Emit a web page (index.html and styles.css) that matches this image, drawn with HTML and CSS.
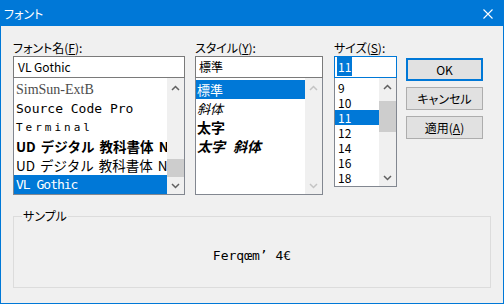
FILE: index.html
```html
<!DOCTYPE html>
<html lang="ja">
<head>
<meta charset="utf-8">
<title>フォント</title>
<link rel="stylesheet" href="styles.css">
</head>
<body>
<div class="window">
  <div class="titlebar">
    <span class="title">フォント</span>
    <svg class="close" width="10" height="10" viewBox="0 0 10 10"><path d="M0.5 0.5 L9.5 9.5 M9.5 0.5 L0.5 9.5" stroke="#fff" stroke-width="1.1" fill="none"/></svg>
  </div>
  <div class="content">
    <div class="top">
      <div class="col col-font">
        <div class="lbl">フォント名(<u>F</u>):</div>
        <div class="edit">VL Gothic</div>
        <div class="list list-font">
          <div class="items">
            <div class="item f-simsun">SimSun-ExtB</div>
            <div class="item f-scp">Source Code Pro</div>
            <div class="item f-term">Terminal</div>
            <div class="item f-ud bold">UD デジタル 教科書体 N-B</div>
            <div class="item f-ud">UD デジタル 教科書体 N-R</div>
            <div class="item f-vl sel">VL Gothic</div>
          </div>
          <div class="sb">
            <div class="sb-btn up"><svg width="9" height="6" viewBox="0 0 9 6"><polyline points="1,5 4.5,1.5 8,5" fill="none" stroke="#606060" stroke-width="1.5"/></svg></div>
            <div class="sb-track end"><div class="thumb t-font"></div></div>
            <div class="sb-btn down"><svg width="9" height="6" viewBox="0 0 9 6"><polyline points="1,1 4.5,4.5 8,1" fill="none" stroke="#606060" stroke-width="1.5"/></svg></div>
          </div>
        </div>
      </div>
      <div class="col col-style">
        <div class="lbl">スタイル(<u>Y</u>):</div>
        <div class="edit e-style">標準</div>
        <div class="list list-style">
          <div class="items">
            <div class="item s-item sel">標準</div>
            <div class="item s-item ital">斜体</div>
            <div class="item s-item s-bold bold">太字</div>
            <div class="item s-item s-bold bold ital">太字<span class="sp"></span>斜体</div>
          </div>
          <div class="sb">
            <div class="sb-btn up"><svg width="9" height="6" viewBox="0 0 9 6"><polyline points="1,5 4.5,1.5 8,5" fill="none" stroke="#c4c4c4" stroke-width="1.5"/></svg></div>
            <div class="sb-track"></div>
            <div class="sb-btn down"><svg width="9" height="6" viewBox="0 0 9 6"><polyline points="1,1 4.5,4.5 8,1" fill="none" stroke="#c4c4c4" stroke-width="1.5"/></svg></div>
          </div>
        </div>
      </div>
      <div class="col col-size">
        <div class="lbl">サイズ(<u>S</u>):</div>
        <div class="edit e-size focus"><span class="hl">11</span></div>
        <div class="list list-size">
          <div class="items">
            <div class="item z-item">9</div>
            <div class="item z-item">10</div>
            <div class="item z-item sel">11</div>
            <div class="item z-item">12</div>
            <div class="item z-item">14</div>
            <div class="item z-item">16</div>
            <div class="item z-item">18</div>
          </div>
          <div class="sb">
            <div class="sb-btn up z-up"><svg width="9" height="6" viewBox="0 0 9 6"><polyline points="1,5 4.5,1.5 8,5" fill="none" stroke="#606060" stroke-width="1.5"/></svg></div>
            <div class="sb-track"><div class="thumb t-size"></div></div>
            <div class="sb-btn down"><svg width="9" height="6" viewBox="0 0 9 6"><polyline points="1,1 4.5,4.5 8,1" fill="none" stroke="#606060" stroke-width="1.5"/></svg></div>
          </div>
        </div>
      </div>
      <div class="buttons">
        <div class="btn default">OK</div>
        <div class="btn">キャンセル</div>
        <div class="btn">適用(<u>A</u>)</div>
      </div>
    </div>
    <fieldset class="sample">
      <legend>サンプル</legend>
      <div class="sample-box"><span class="sample-text">Ferqœm’ 4€</span></div>
    </fieldset>
  </div>
</div>
</body>
</html>
```

FILE: styles.css
```css
html, body {
  margin: 0;
  padding: 0;
  background: #f0f0f0;
}

.window {
  width: 504px;
  height: 304px;
  box-sizing: border-box;
  border: 1px solid #0078d7;
  background: #f0f0f0;
  font-family: "Noto Sans CJK JP", "Noto Sans", sans-serif;
  font-size: 12px;
  font-feature-settings: "palt";
  color: #000;
  display: flex;
  flex-direction: column;
}

.titlebar {
  height: 25px;
  flex: none;
  background: #0078d7;
  color: #fff;
  display: flex;
  align-items: center;
  justify-content: space-between;
  padding: 0 10px 0 3px;
}

.title {
  line-height: 16px;
}

.close {
  display: block;
}

.content {
  padding: 15px 0 0 12px;
}

.top {
  display: flex;
  align-items: flex-start;
}

.col-font { width: 172px; margin-right: 10px; }
.col-style { width: 128px; margin-right: 11px; }
.col-size { width: 63px; margin-right: 9px; }

.lbl {
  height: 15px;
  line-height: 14px;
  white-space: nowrap;
}

.edit {
  height: 22px;
  box-sizing: border-box;
  border: 1px solid #7a7a7a;
  background: #fff;
  padding: 0 4px;
  line-height: 20px;
  white-space: nowrap;
  overflow: hidden;
}

.e-style { padding-left: 3px; }
.e-size { padding-left: 2px; }
.edit.focus { border-color: #0078d7; }

.hl {
  background: #0078d7;
  color: #fff;
  padding: 1px 1px;
}

.list {
  box-sizing: border-box;
  border: 1px solid #828790;
  border-top: 0;
  background: #fff;
  display: flex;
}

.list-font, .list-style { height: 117px; }
.list-size { height: 109px; }

.items {
  flex: 1;
  min-width: 0;
  padding-top: 2px;
  overflow: hidden;
}

.item {
  height: 19px;
  line-height: 19px;
  white-space: nowrap;
  overflow: hidden;
  padding-left: 2px;
}

.sel {
  background: #0078d7;
  color: #fff;
}

.f-simsun {
  font-family: "Liberation Serif", serif;
  font-size: 14px;
  color: #4c4c4c;
}

.f-scp {
  font-family: "DejaVu Sans Mono", monospace;
  font-size: 13px;
}

.f-term {
  font-family: "DejaVu Sans Mono", monospace;
  font-size: 11px;
  letter-spacing: 3px;
}

.f-ud {
  font-size: 13.5px;
  font-feature-settings: normal;
  word-spacing: 2px;
}

.f-vl {
  font-family: "DejaVu Sans Mono", monospace;
  font-size: 13px;
  letter-spacing: -1px;
}

.bold { font-weight: bold; }
.ital { font-style: italic; }

.s-item {
  font-size: 13px;
  padding-left: 1px;
}

.s-item.s-bold {
  font-size: 14px;
}

.sp {
  display: inline-block;
  width: 8px;
}

.z-item {
  height: 15px;
  line-height: 15px;
  padding-left: 3px;
}

.sb {
  width: 17px;
  flex: none;
  background: #f0f0f0;
  display: flex;
  flex-direction: column;
}

.sb-btn {
  height: 17px;
  flex: none;
  display: flex;
  align-items: center;
  justify-content: center;
}

.sb-btn svg { display: block; }

.sb-btn.up { height: 19px; }
.sb-btn.z-up { height: 18px; }

.sb-track {
  flex: 1;
  display: flex;
  flex-direction: column;
  justify-content: flex-start;
}

.sb-track.end { justify-content: flex-end; }

.thumb {
  background: #cdcdcd;
}

.t-font { height: 18px; }
.t-size { height: 31px; margin-top: 5px; }

.buttons {
  width: 77px;
  padding-top: 17px;
  display: flex;
  flex-direction: column;
  gap: 6px;
}

.btn {
  height: 23px;
  box-sizing: border-box;
  border: 1px solid #adadad;
  background: #e1e1e1;
  display: flex;
  align-items: center;
  justify-content: center;
  line-height: 16px;
  white-space: nowrap;
}

.btn.default {
  border: 2px solid #0078d7;
}

.sample {
  margin: 13px 0 0 0;
  padding: 0;
  width: 478px;
  box-sizing: border-box;
  border: 1px solid #dcdcdc;
  min-width: 0;
}

.sample legend {
  margin-left: 8px;
  padding: 0 1px;
  line-height: 16px;
  height: 16px;
}

.sample-box {
  height: 63px;
  display: flex;
  align-items: center;
  justify-content: center;
}

.sample-text {
  font-family: "DejaVu Sans Mono", monospace;
  font-size: 13px;
  line-height: 16px;
}
```
